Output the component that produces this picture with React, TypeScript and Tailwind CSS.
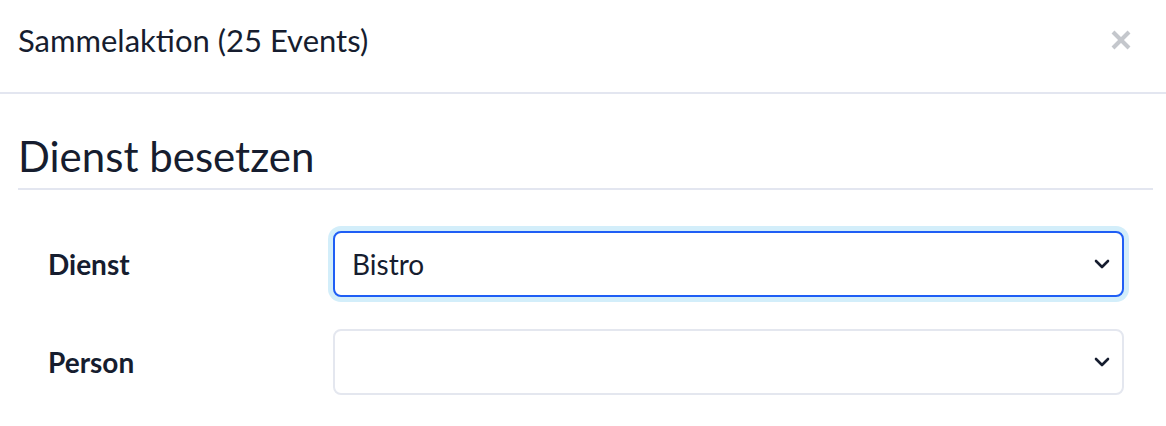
import React from "react";

function Chevron() {
  return (
    <svg width="16" height="12" viewBox="0 0 16 12" fill="none" aria-hidden="true">
      <polyline
        points="2,3 8,9 14,3"
        stroke="#161d2f"
        strokeWidth="2.6"
        strokeLinecap="round"
        strokeLinejoin="round"
      />
    </svg>
  );
}

function SelectBox({ value, focused }: { value?: string; focused?: boolean }) {
  return (
    <div
      className={
        focused
          ? "flex h-[66px] w-[791px] items-center justify-between rounded-[8px] border-2 border-[#1f5ef5] bg-white pl-[17px] pr-[12px] shadow-[0_0_0_5px_#d3eefa]"
          : "flex h-[66px] w-[791px] items-center justify-between rounded-[8px] border-2 border-[#e4e7ef] bg-white pl-[17px] pr-[12px]"
      }
    >
      <span className="text-[28px] leading-none text-[#161d2f]">{value ?? ""}</span>
      <Chevron />
    </div>
  );
}

export default function App() {
  return (
    <div className="h-[426px] w-[1166px] bg-white font-['Lato',sans-serif] text-[#161d2f]">
      <div className="flex h-[94px] items-center justify-between border-b-2 border-[#e3e6f0] pl-[18px] pr-[34px] pb-[12px]">
        <h2 className="text-[31px] leading-none">Sammelaktion (25 Events)</h2>
        <svg width="22" height="22" viewBox="0 0 22 22" aria-hidden="true">
          <line x1="3" y1="3" x2="19" y2="19" stroke="#c4c7cc" strokeWidth="4" />
          <line x1="19" y1="3" x2="3" y2="19" stroke="#c4c7cc" strokeWidth="4" />
        </svg>
      </div>
      <div className="pl-[18px] pr-[13px]">
        <h3 className="mt-[41px] border-b-2 border-[#e3e6f0] pb-[11px] text-[42px] leading-none">
          Dienst besetzen
        </h3>
        <div className="mt-[41px] flex flex-col gap-[32px] pl-[30px] pr-[29px]">
          <div className="flex items-center justify-between">
            <label className="text-[28px] font-bold">Dienst</label>
            <SelectBox value="Bistro" focused />
          </div>
          <div className="flex items-center justify-between">
            <label className="text-[28px] font-bold">Person</label>
            <SelectBox />
          </div>
        </div>
      </div>
    </div>
  );
}
